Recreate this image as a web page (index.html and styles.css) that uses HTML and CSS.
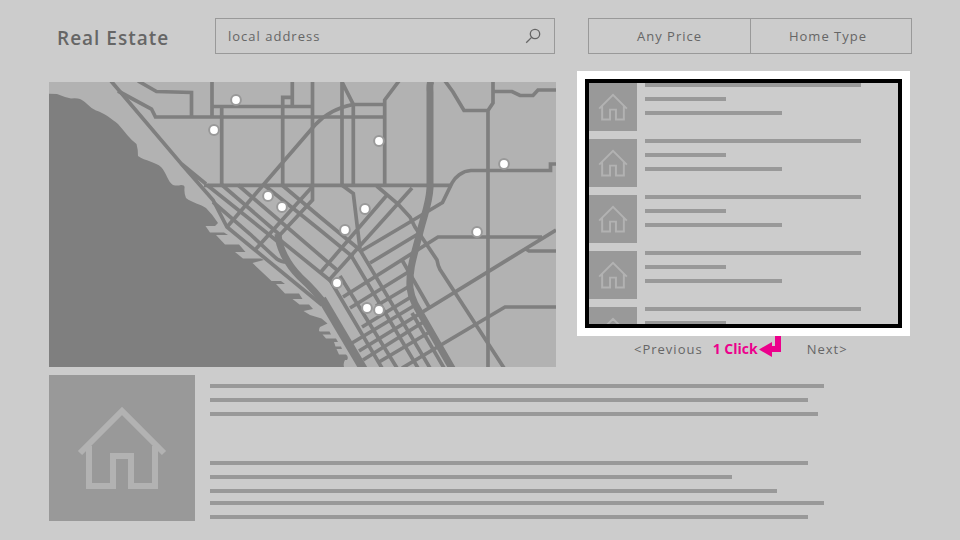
FILE: index.html
```html
<!DOCTYPE html>
<html lang="en">
<head>
<meta charset="utf-8">
<meta name="viewport" content="width=device-width, initial-scale=1">
<title>Real Estate</title>
<link rel="stylesheet" href="styles.css">
</head>
<body>
<svg class="defs" aria-hidden="true">
  <symbol id="house" viewBox="0 0 146 146">
    <path d="M31 78L73 36L115 78M40 71V111H64V81H82V111H106V71" fill="none" stroke="#b2b2b2" stroke-width="6"/>
  </symbol>
</svg>

<header class="header">
  <h1 class="brand">Real Estate</h1>
  <form class="search">
    <input class="search-input" type="text" value="local address" aria-label="Address">
    <button class="search-button" type="button" aria-label="Search">
      <svg width="16" height="16" viewBox="0 0 16 16" fill="none" stroke="#666" stroke-width="1.3"><circle cx="10" cy="6" r="4.7"/><path d="M6.6 9.4L1.2 14.8"/></svg>
    </button>
  </form>
  <div class="filters">
    <button class="filter" type="button">Any Price</button>
    <button class="filter" type="button">Home Type</button>
  </div>
</header>

<main class="main">
  <section class="map">
    <svg class="map-art" viewBox="49 82 507 285" role="img" aria-label="Map">
      <rect x="49" y="82" width="507" height="285" fill="#b2b2b2"/>
      <path fill="#7f7f7f" d="M49 93.7L57 94Q64 97 71 98.500Q77 98 80 99C85 101 90 108 96 110.500C104 113 112 119 118 124C125 132 130 139 136.500 144Q138 149 138 156C145 161 156 162 161 167C166 172 168 182 173 185Q177 186 181 185Q185 185 184.500 188Q184 194 186 198C192 203 201 204 206 208Q213 215 218 223L215 226H205.500L210 232.500H224L228 235H216L225 244.500H239L245.500 252H235L243 258.500H261L264 260L252.500 263L271.500 281H281L285 284H276L285 293.500H299L302.500 299H292.500L299.500 304.500H309L313 309L303.500 311L310 315L321.500 318.500L327.500 323.500L320 327Q318 331 320 331.500H329.500L331 334.500H322.500L326 338.500H336L338 342H334L335.500 346.500H341L342 349H336.500L339 354.500H346Q349 357 347 360H345Q343 363 344 367H49Z"/>
      <g fill="none" stroke="#7f7f7f" stroke-width="3.7">
        <path d="M111 81L181 163.500L206 184M181 163.500L213 200L227 227L255 250L322 305"/>
        <path d="M118 91L151.500 109L155.500 117H385"/>
        <path d="M138 81L156.500 91.500L191.500 92.500V117"/>
        <path d="M212 82V117M212 106.500H313M221.700 106V185M282.700 185V97.300H292.300M292.300 82V106"/>
        <path d="M312.500 82V200L277 238M342 82V185M341.500 81L353.300 104.500V185"/>
        <path d="M227 227L315 125C327 112 340 107 353 104.500H385"/>
        <path d="M399 81L384.700 100V185M204 185.300H452"/>
        <path d="M445 81L453 92L464 110.500H488L493 103V82M493 91.500H512L520 95.500H533L538 90H556M488 110V367"/>
        <path d="M556 164H550.500V170.500H471C462 171 455 177 452 183L442.500 202.500L405 225L361 251"/>
        <path d="M213 202L250 234Q270 253 277 259Q281 262 287 262M207 185L277 241M222 185L280 235M238 185L337 270M264 185L320 230L353 257M282 185L320 217L360 250M280 240L332 282"/>
        <path d="M312 187L255 250M387 195L320 273M412 188L330 279M341.700 185L353.300 193.500L360 249M376.700 186L398 204L410 217L415 227L437 260Q438 266 440 269.500L504 368"/>
        <path d="M418 234L370 263M542 237H438L343 297M410 271L350 308M408 287L376 306M411 297L362 327M417 304L352 343M556 230L359 351M425 321L363 360M428 333L379 362M556 307H505L402 368M526 249L529 251H556"/>
        <path d="M330 280L382 368M340 276L397 368M352 257L418 368M360 250L430 368M402 260L429 307M412 313L444 368"/>
      </g>
      <g fill="none" stroke="#7f7f7f">
        <path stroke-width="7" d="M278 234C279 248 287 264 300 277C311 287 317 293 326 306"/>
        <path stroke-width="8.5" d="M322 299L364 370"/>
        <path stroke-width="7" d="M431 81Q429.500 84 430 92V188C429 205 424 215 420 232C414 256 409 268 410 288Q411 296 415 304L453 370"/>
      </g>
      <g fill="#fff" stroke="#999" stroke-width="2">
        <circle cx="236" cy="100" r="4.900"/><circle cx="214" cy="130" r="4.900"/><circle cx="379" cy="141" r="4.900"/><circle cx="504" cy="164" r="4.900"/><circle cx="268" cy="196" r="4.900"/><circle cx="282" cy="207" r="4.900"/><circle cx="365" cy="209" r="4.900"/><circle cx="345" cy="230" r="4.900"/><circle cx="477" cy="232" r="4.900"/><circle cx="337" cy="283" r="4.900"/><circle cx="367" cy="308" r="4.900"/><circle cx="379" cy="310" r="4.900"/>
      </g>
    </svg>
  </section>

  <section class="results">
    <div class="focus-frame">
      <ul class="list">
        <li class="item"><svg class="thumb"><use href="#house"/></svg><div class="lines"><i class="line long"></i><i class="line short"></i><i class="line medium"></i></div></li>
        <li class="item"><svg class="thumb"><use href="#house"/></svg><div class="lines"><i class="line long"></i><i class="line short"></i><i class="line medium"></i></div></li>
        <li class="item"><svg class="thumb"><use href="#house"/></svg><div class="lines"><i class="line long"></i><i class="line short"></i><i class="line medium"></i></div></li>
        <li class="item"><svg class="thumb"><use href="#house"/></svg><div class="lines"><i class="line long"></i><i class="line short"></i><i class="line medium"></i></div></li>
        <li class="item"><svg class="thumb"><use href="#house"/></svg><div class="lines"><i class="line long"></i><i class="line short"></i><i class="line medium"></i></div></li>
      </ul>
    </div>
    <nav class="pager" aria-label="Result pages">
      <a class="page-link" href="#">&lt;Previous</a>
      <span class="click-note">1 Click</span>
      <svg class="click-arrow" width="22" height="21" viewBox="0 0 22 21" aria-hidden="true"><path fill="#ec008c" d="M16 0h6v16h-9v5L0 13.500L13 6v4h3z"/></svg>
      <a class="page-link" href="#">Next&gt;</a>
    </nav>
  </section>
</main>

<section class="detail">
  <svg class="photo"><use href="#house"/></svg>
  <div class="copy">
    <div class="lines"><i class="line w-614"></i><i class="line w-598"></i><i class="line w-608"></i></div>
    <div class="lines"><i class="line w-598"></i><i class="line w-522"></i><i class="line w-567"></i></div>
    <div class="lines"><i class="line w-614"></i><i class="line w-598"></i></div>
  </div>
</section>
</body>
</html>
```
FILE: styles.css
```css
* {
  box-sizing: border-box;
}

body {
  margin: 0;
  padding: 18px 48px 18px 49px;
  background: #ccc;
  color: #666;
  font-family: "Open Sans", "Noto Sans", sans-serif;
  font-size: 13px;
  letter-spacing: 1px;
}

.defs {
  position: absolute;
  width: 0;
  height: 0;
}

button,
input {
  font: inherit;
  letter-spacing: inherit;
  color: inherit;
  background: none;
  border: 0;
  margin: 0;
  padding: 0;
}

.header {
  display: grid;
  grid-template-columns: 166px 340fr 33px 324fr;
  min-height: 36px;
}

.brand {
  margin: 0;
  padding: 8px 0 0 8px;
  font-size: 19px;
  line-height: 24px;
  font-weight: 600;
}

.search {
  display: flex;
  align-items: center;
  border: 1px solid #999;
  padding: 0 13px 0 12px;
}

.search-input {
  flex: 1;
  min-width: 0;
  outline: 0;
}

.search-button {
  display: flex;
}

.filters {
  grid-column: 4;
  display: grid;
  grid-template-columns: 1fr 1fr;
  border: 1px solid #999;
}

.filter + .filter {
  border-left: 1px solid #999;
  padding-right: 6px;
}

.main {
  display: grid;
  grid-template-columns: 507fr 333fr;
  column-gap: 21px;
  align-items: start;
  margin: 17px 2px 8px 0;
}

.map {
  margin-top: 11px;
}

.map-art {
  display: block;
  width: 100%;
  height: auto;
}

.focus-frame {
  border: 8px solid #fff;
}

.list {
  max-height: 249px;
  margin: 0;
  padding: 0;
  border: 4px solid #000;
  overflow: hidden;
  list-style: none;
}

.item {
  display: flex;
  gap: 8px;
  margin-bottom: 8px;
}

.thumb {
  flex: none;
  width: 48px;
  height: 48px;
  background: #999;
}

.lines {
  display: grid;
  align-content: start;
  gap: 10px;
  flex: 1;
}

.line {
  height: 4px;
  max-width: 100%;
  background: #999;
}

.long { width: 216px; }
.short { width: 81px; }
.medium { width: 137px; }
.w-522 { width: 522px; }
.w-567 { width: 567px; }
.w-598 { width: 598px; }
.w-608 { width: 608px; }
.w-614 { width: 614px; }

.pager {
  display: flex;
  padding-left: 57px;
  line-height: 26px;
}

.page-link {
  color: inherit;
  text-decoration: none;
}

.click-note {
  margin-left: 10px;
  color: #ec008c;
  font-size: 14px;
  font-weight: 700;
  letter-spacing: 0;
}

.click-arrow {
  margin: 0 26px 0 1px;
}

.detail {
  display: flex;
  gap: 15px;
}

.photo {
  flex: none;
  width: 146px;
  height: 146px;
  background: #999;
}

.copy {
  flex: 1;
  padding-top: 9px;
}

.lines + .lines {
  margin-top: 45px;
}

.lines + .lines + .lines {
  margin-top: 8px;
}
```
